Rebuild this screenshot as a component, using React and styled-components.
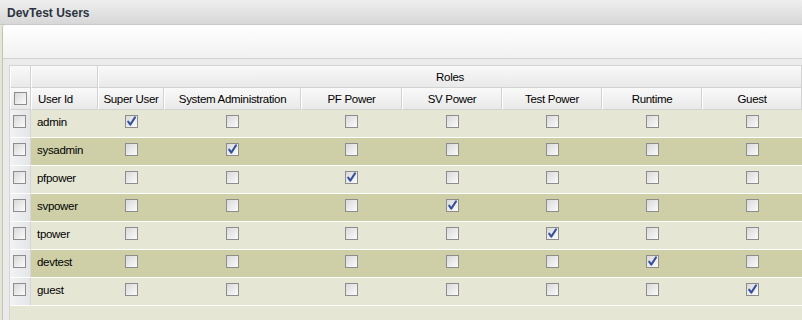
import React from "react";
import styled, { createGlobalStyle } from "styled-components";

const roles = [
  { label: "Super User", width: 66 },
  { label: "System Administration", width: 137 },
  { label: "PF Power", width: 101 },
  { label: "SV Power", width: 100 },
  { label: "Test Power", width: 100 },
  { label: "Runtime", width: 100 },
  { label: "Guest", width: 100 },
];

const users = ["admin", "sysadmin", "pfpower", "svpower", "tpower", "devtest", "guest"];

function Check({ checked }) {
  return (
    <Box>
      {checked && (
        <svg width="11" height="11" viewBox="0 0 11 11">
          <path d="M2.2 5.6 L4.3 8.6 L9 1.4" fill="none" stroke="#34509a" strokeWidth="2" strokeLinecap="round" strokeLinejoin="round" />
        </svg>
      )}
    </Box>
  );
}

export default function App() {
  return (
    <>
      <GlobalStyle />
      <Page>
        <TitleBar>DevTest Users</TitleBar>
        <Panel>
          <Toolbar />
          <GridWrap>
            <Grid>
              <colgroup>
                <col style={{ width: 21 }} />
                <col style={{ width: 67 }} />
                {roles.map((r) => (
                  <col key={r.label} style={{ width: r.width }} />
                ))}
              </colgroup>
              <thead>
                <tr>
                  <HeadCell />
                  <HeadCell />
                  <HeadCell colSpan={roles.length}>Roles</HeadCell>
                </tr>
                <tr>
                  <HeadCell>
                    <Check />
                  </HeadCell>
                  <HeadCell $left>User Id</HeadCell>
                  {roles.map((r) => (
                    <HeadCell key={r.label}>{r.label}</HeadCell>
                  ))}
                </tr>
              </thead>
              <tbody>
                {users.map((u, i) => (
                  <Row key={u} $alt={i % 2 === 1}>
                    <SelectCell>
                      <Check />
                    </SelectCell>
                    <NameCell>{u}</NameCell>
                    {roles.map((r, j) => (
                      <BoxCell key={r.label}>
                        <Check checked={i === j} />
                      </BoxCell>
                    ))}
                  </Row>
                ))}
              </tbody>
            </Grid>
          </GridWrap>
        </Panel>
      </Page>
    </>
  );
}

const GlobalStyle = createGlobalStyle`
  body {
    margin: 0;
    font-family: "Liberation Sans", Arial, sans-serif;
    font-size: 11.5px;
    letter-spacing: -0.3px;
    color: #000;
  }
`;

const Page = styled.div`
  width: 802px;
  height: 320px;
  overflow: hidden;
  display: flex;
  flex-direction: column;
  background: #e6e6d5;
`;

const TitleBar = styled.div`
  height: 25px;
  flex: none;
  box-sizing: border-box;
  padding: 6px 0 0 7px;
  background: linear-gradient(#efefef, #d7d7d7);
  border-bottom: 1px solid #c9c9c9;
  font-weight: bold;
  font-size: 12px;
  letter-spacing: 0;
  color: #2b3440;
`;

const Panel = styled.div`
  flex: 1;
  margin-left: 2px;
  border-left: 1px solid #c2c2b8;
  background: #ebebeb;
  display: flex;
  flex-direction: column;
  border-top-left-radius: 3px;
`;

const Toolbar = styled.div`
  height: 33px;
  flex: none;
  background: linear-gradient(#ffffff, #f1f1f1);
  border-bottom: 1px solid #d2d2d2;
  border-top-left-radius: 3px;
`;

const GridWrap = styled.div`
  flex: 1;
  margin: 6px 0 0 6px;
  background: #e6e6d5;
  border-left: 1px solid #d4d4d4;
  border-top: 1px solid #d4d4d4;
`;

const Grid = styled.table`
  border-collapse: separate;
  border-spacing: 0;
  table-layout: fixed;
  width: 792px;
`;

const HeadCell = styled.th`
  height: 21px;
  padding: 0 ${(p) => (p.$left ? "6px" : "0")};
  text-align: ${(p) => (p.$left ? "left" : "center")};
  font-weight: normal;
  background: linear-gradient(#f9f9f9, #e9e9e9);
  border-right: 1px solid #d2d2d2;
  border-bottom: 1px solid #d2d2d2;
  border-left: 1px solid #ffffff;
  white-space: nowrap;
  vertical-align: middle;

  & > span {
    margin: 0 auto;
  }
`;

const Row = styled.tr`
  background: ${(p) => (p.$alt ? "#cecfa7" : "#e6e6d5")};

  td {
    height: 22px;
    border-bottom: 1px solid #ffffff;
    vertical-align: top;
    padding-top: 5px;
    padding-bottom: 0;
    box-sizing: content-box;
  }
`;

const SelectCell = styled.td`
  background: linear-gradient(to right, #f3f3f3, #e3e5e9);
  border-right: 1px solid #d6d6d6;
  padding-left: 3px;
`;

const NameCell = styled.td`
  padding-left: 6px;
  line-height: 14px;
`;

const BoxCell = styled.td`
  text-align: center;

  & > span {
    margin: 0 auto;
  }
`;

const Box = styled.span`
  display: block;
  width: 11px;
  height: 11px;
  border: 1px solid #8d8d8d;
  background: linear-gradient(135deg, #d9d9d9, #fbfbfb);
  position: relative;

  svg {
    position: absolute;
    left: 0;
    top: 0;
  }
`;
